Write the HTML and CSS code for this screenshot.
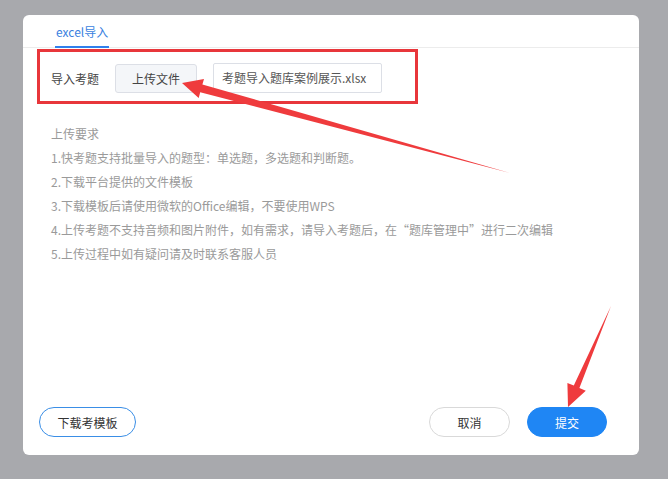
FILE: index.html
```html
<!DOCTYPE html>
<html lang="zh">
<head>
<meta charset="utf-8">
<title>excel导入</title>
<link rel="stylesheet" href="styles.css">
</head>
<body>
<div class="modal">
  <div class="tabs">
    <div class="tab">excel导入</div>
  </div>
  <div class="content">
    <div class="upload-row">
      <span class="label">导入考题</span>
      <button class="btn-upload">上传文件</button>
      <div class="file-name">考题导入题库案例展示.xlsx</div>
    </div>
    <div class="rules">
      <p>上传要求</p>
      <p>1.快考题支持批量导入的题型：单选题，多选题和判断题。</p>
      <p>2.下载平台提供的文件模板</p>
      <p>3.下载模板后请使用微软的Office编辑，不要使用WPS</p>
      <p>4.上传考题不支持音频和图片附件，如有需求，请导入考题后，在“题库管理中”进行二次编辑</p>
      <p>5.上传过程中如有疑问请及时联系客服人员</p>
    </div>
  </div>
  <div class="footer">
    <button class="btn btn-outline">下载考模板</button>
    <div class="actions">
      <button class="btn btn-cancel">取消</button>
      <button class="btn btn-primary">提交</button>
    </div>
  </div>
</div>
<svg class="annotations" width="668" height="479" viewBox="0 0 668 479">
  <rect x="38.5" y="50.5" width="378" height="52" fill="none" stroke="#e8363b" stroke-width="3"/>
  <polygon points="182,83 204,79 202.4,84.4 510,173 200.2,92.2 198.7,98" fill="#ef3b3d"/>
  <polygon points="568,407 567.4,382.9 573.8,385.6 611,306 579.4,388 585.8,390.7" fill="#ef3b3d"/>
</svg>
</body>
</html>
```
FILE: styles.css
```css
* { box-sizing: border-box; }
html, body { margin: 0; }
body {
  width: 668px;
  height: 479px;
  background: #a8a9ad;
  padding: 15px 0 0 23px;
  font-family: "Noto Sans CJK SC", "Noto Sans", sans-serif;
  font-size: 12px;
  color: #333;
  position: relative;
  overflow: hidden;
}
.modal {
  width: 616px;
  height: 440px;
  background: #fff;
  border-radius: 6px;
  display: flex;
  flex-direction: column;
}
.tabs {
  display: flex;
  height: 33px;
  padding-left: 32px;
  border-bottom: 1px solid #ececec;
}
.tab {
  padding: 8px 1px 5px;
  line-height: 18px;
  color: #3a7fe0;
  border-bottom: 2px solid #2f80ed;
  height: 33px;
}
.content {
  padding: 0 28px;
}
.upload-row {
  margin-top: 15px;
  display: flex;
  align-items: center;
  height: 30px;
}
.label {
  width: 64px;
  color: #444;
}
.btn-upload {
  width: 82px;
  height: 29px;
  border: 1px solid #dcdfe6;
  border-radius: 3px;
  background: #f4f6f9;
  font: inherit;
  color: #444;
  padding: 0;
  margin-right: 16px;
}
.file-name {
  width: 169px;
  height: 30px;
  border: 1px solid #dcdfe6;
  border-radius: 2px;
  line-height: 28px;
  padding-left: 8px;
  color: #555;
}
.rules {
  margin-top: 29px;
  color: #9a9a9a;
}
.rules p {
  margin: 0;
  line-height: 24px;
}
.footer {
  margin-top: auto;
  display: flex;
  justify-content: space-between;
  padding: 0 32px 18px 16px;
}
.actions {
  display: flex;
  gap: 17px;
}
.btn {
  height: 30px;
  border-radius: 15px;
  font: inherit;
  padding: 0;
  background: #fff;
}
.btn-outline {
  width: 97px;
  border: 1px solid #3a8ee6;
  color: #333;
}
.btn-cancel {
  width: 81px;
  border: 1px solid #d9d9d9;
  color: #333;
}
.btn-primary {
  width: 80px;
  border: 1px solid #1f86f4;
  background: #1f86f4;
  color: #fff;
}
.annotations {
  position: absolute;
  top: 0;
  left: 0;
  pointer-events: none;
}
```
